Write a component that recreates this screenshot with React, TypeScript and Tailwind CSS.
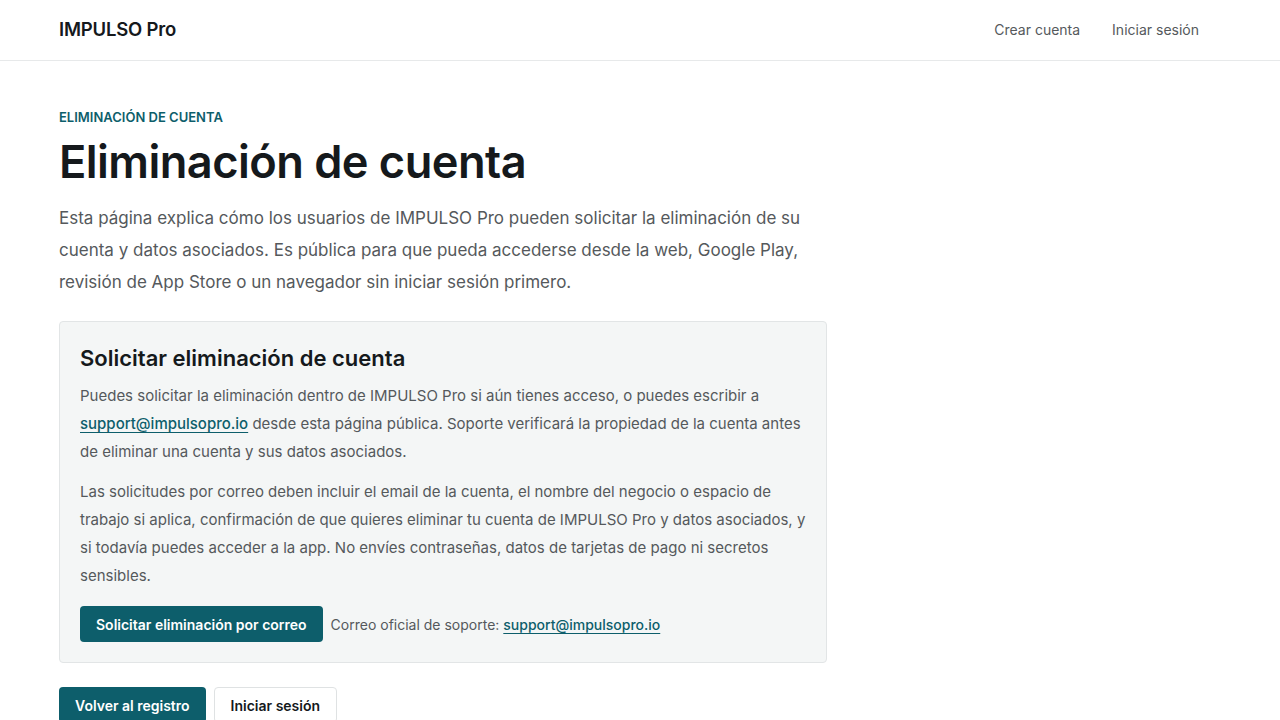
import React from "react";

const TEAL = "bg-[#0d5e6b]";

const sections = [
  {
    t: "Qué datos se eliminan",
    d: [
      "Al eliminar tu cuenta de IMPULSO Pro se eliminan tu perfil, la información del negocio o espacio de trabajo, clientes, productos, ventas registradas, configuraciones y cualquier archivo que hayas subido a la app.",
      "Algunos registros pueden conservarse por un período limitado cuando la ley lo exige, por ejemplo registros de facturación o prevención de fraude. Estos datos no se usan para ningún otro fin.",
    ],
  },
  {
    t: "Plazos",
    d: [
      "Las solicitudes verificadas se procesan normalmente en un plazo de 30 días. Recibirás una confirmación por correo cuando la eliminación se haya completado.",
      "Las copias de seguridad se eliminan de forma automática siguiendo su ciclo de rotación habitual, que puede tardar hasta 90 días adicionales.",
    ],
  },
  {
    t: "Suscripciones",
    d: [
      "Eliminar tu cuenta no cancela automáticamente las suscripciones gestionadas por Google Play o App Store. Cancela tu suscripción desde la tienda correspondiente antes de solicitar la eliminación para evitar cargos futuros.",
    ],
  },
  {
    t: "Eliminación parcial de datos",
    d: [
      "Si prefieres conservar tu cuenta pero eliminar ciertos datos, puedes borrar registros individuales desde la app o escribir a soporte indicando qué información quieres eliminar.",
    ],
  },
  {
    t: "Contacto",
    d: [
      "Para cualquier pregunta sobre la eliminación de cuenta o el tratamiento de tus datos, escribe a support@impulsopro.io.",
    ],
  },
];

export default function App() {
  return (
    <div className="min-h-screen bg-white text-[#15191c] font-['Inter','Noto_Sans',sans-serif] antialiased">
      <header className="border-b border-[#e7e9ea]">
        <div className="flex h-[60px] w-full items-center justify-between pl-[59px] pr-[73px]">
          <a className="text-[18.5px] font-semibold tracking-[-0.2px] text-[#15191c]">IMPULSO Pro</a>
          <nav className="flex items-center gap-4 pb-[2px] text-[14px] text-[#55595c]">
            <a className="px-2">Crear cuenta</a>
            <a className="px-2">Iniciar sesión</a>
          </nav>
        </div>
      </header>

      <main className="w-full pb-24 pl-[59px] pr-[73px] pt-[46px]">
        <div className="max-w-[768px]">
          <p className="text-[13px] font-semibold uppercase leading-5 text-[#0d5e6b]">
            Eliminación de cuenta
          </p>
          <h1 className="mt-[7px] text-[45.2px] font-semibold leading-[56px] tracking-[-0.55px] text-[#15191c]">
            Eliminación de cuenta
          </h1>
          <p className="mt-[12px] text-[17px] leading-8 text-[#55595c]">
            Esta página explica cómo los usuarios de IMPULSO Pro pueden solicitar la eliminación de su cuenta y
            datos asociados. Es pública para que pueda accederse desde la web, Google Play, revisión de App Store
            o un navegador sin iniciar sesión primero.
          </p>

          <section className="mt-[23px] rounded-[4px] border border-[#e2e5e6] bg-[#f4f6f6] px-5 pb-5 pt-[22px]">
            <h2 className="text-[22px] font-semibold leading-7 text-[#15191c]">
              Solicitar eliminación de cuenta
            </h2>
            <p className="mt-[10px] text-[15px] leading-7 text-[#55595c]">
              Puedes solicitar la eliminación dentro de IMPULSO Pro si aún tienes acceso, o puedes escribir a{" "}
              <a className="font-medium text-[#0d5e6b] underline underline-offset-[3px]">support@impulsopro.io</a>{" "}
              desde esta página pública. Soporte verificará la propiedad de la cuenta antes de eliminar una cuenta y
              sus datos asociados.
            </p>
            <p className="mt-3 text-[15px] leading-7 text-[#55595c]">
              Las solicitudes por correo deben incluir el email de la cuenta, el nombre del negocio o espacio de
              trabajo si aplica, confirmación de que quieres eliminar tu cuenta de IMPULSO Pro y datos asociados, y
              si todavía puedes acceder a la app. No envíes contraseñas, datos de tarjetas de pago ni secretos
              sensibles.
            </p>
            <div className="mt-4 flex items-center gap-2">
              <a className={`${TEAL} inline-flex h-9 items-center rounded-[4px] px-4 text-[14px] font-semibold text-white`}>
                Solicitar eliminación por correo
              </a>
              <span className="text-[14px] text-[#55595c]">
                Correo oficial de soporte:{" "}
                <a className="font-medium text-[#0d5e6b] underline underline-offset-[3px]">support@impulsopro.io</a>
              </span>
            </div>
          </section>

          <div className="mt-6 flex items-start gap-2">
            <a className={`${TEAL} inline-flex h-9 items-center rounded-[4px] px-4 text-[14px] font-semibold text-white`}>
              Volver al registro
            </a>
            <a className="inline-flex h-9 items-center rounded-[4px] border border-[#dfe2e3] bg-white px-4 text-[14px] font-semibold text-[#15191c]">
              Iniciar sesión
            </a>
          </div>

          {sections.map((s) => (
            <section key={s.t} className="mt-14">
              <h2 className="text-[26px] font-semibold leading-9">{s.t}</h2>
              {s.d.map((p) => (
                <p key={p} className="mt-3 text-[17px] leading-8 text-[#55595c]">
                  {p}
                </p>
              ))}
            </section>
          ))}
        </div>
      </main>

      <footer className="border-t border-[#e7e9ea] py-10">
        <div className="flex w-full items-center justify-between pl-[59px] pr-[73px] text-[14px] text-[#55595c]">
          <span>© IMPULSO Pro</span>
          <div className="flex gap-6">
            <a>Privacidad</a>
            <a>Términos</a>
            <a>Soporte</a>
          </div>
        </div>
      </footer>
    </div>
  );
}
